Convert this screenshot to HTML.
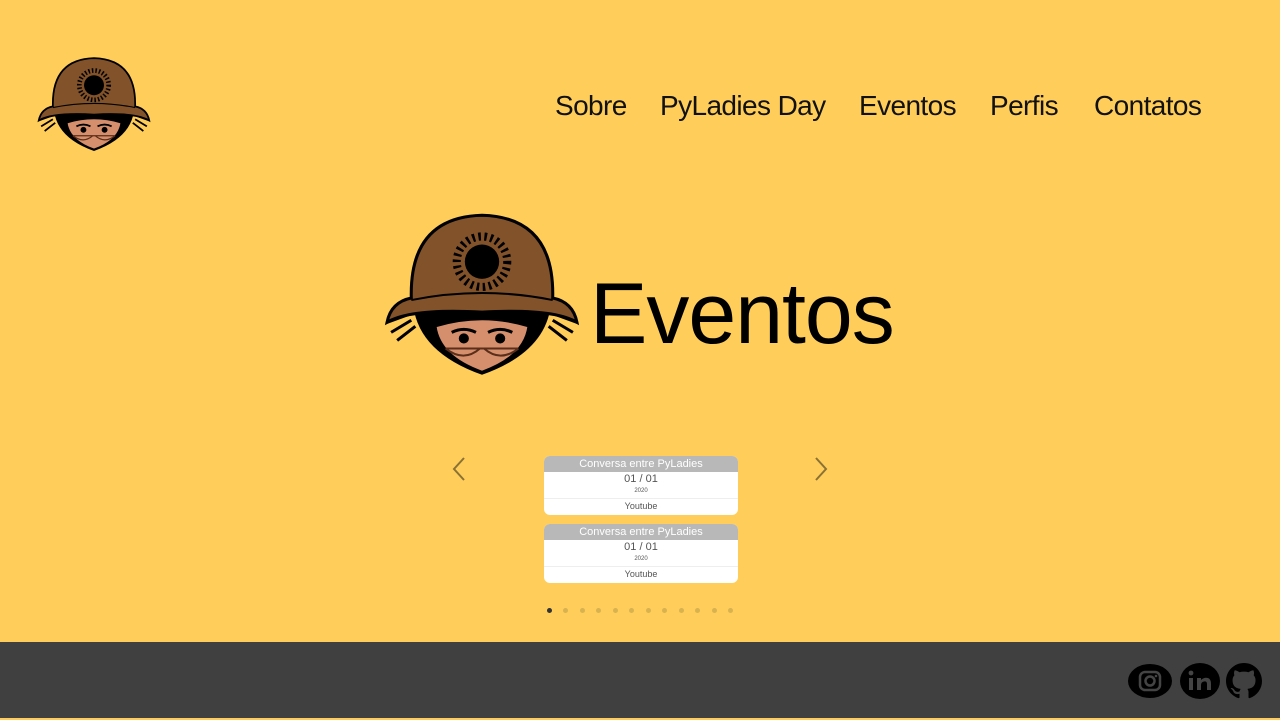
<!DOCTYPE html>
<html><head><meta charset="utf-8"><style>
body{margin:0;width:1280px;height:720px;background:#FFCD59;font-family:"Liberation Sans",sans-serif;position:relative;overflow:hidden}
.nav{position:absolute;top:90px;font-size:28px;color:#111;white-space:nowrap;letter-spacing:-0.6px}
.nav span{position:absolute}
h1{position:absolute;left:590px;top:265px;margin:0;font-size:86px;font-weight:normal;color:#000;letter-spacing:-1px}
.card{position:absolute;left:544px;width:194px;height:59px;background:#fff;border-radius:6px;overflow:hidden;text-align:center;color:#555}
.card .t{background:#b8b8b8;color:#fff;font-size:11px;height:16px;line-height:16px}
.card .d{font-size:11px;height:12px;line-height:14px}
.card .y{font-size:6px;height:14px;line-height:14px;border-bottom:1px solid #eee}
.card .p{font-size:9px;line-height:15px}
.dots{position:absolute;top:608px;left:547px}
.dots i{position:absolute;width:5px;height:5px;border-radius:50%;background:#d8b24f}
footer{position:absolute;left:0;top:642px;width:1280px;height:76px;background:#404040}
</style></head><body>
<svg width="0" height="0" style="position:absolute"><defs>
<g id="m">
<path d="M28 100 L6 108 M30 106 L10 118 M34 112 L16 126 M172 100 L194 108 M170 106 L190 118 M166 112 L184 126" stroke="#000" stroke-width="3"/>
<path d="M32 92 Q38 138 100 160 Q162 138 168 92 Z" fill="#000"/>
<path d="M54 112 Q58 142 100 157 Q142 142 146 112 Q100 98 54 112Z" fill="#D58F6C" stroke="#000" stroke-width="2"/>
<path d="M6 108 Q10 88 30 84 Q28 4 100 2 Q172 4 170 84 Q190 88 194 108 Q170 94 100 98 Q30 94 6 108Z" fill="#82522A" stroke="#000" stroke-width="3"/>
<path d="M30 86 Q100 72 170 86" fill="none" stroke="#000" stroke-width="2"/>
<circle cx="100" cy="48" r="17" fill="#000"/>
<circle cx="100" cy="48" r="21" fill="none" stroke="#82522A" stroke-width="2"/>
<circle cx="100" cy="48" r="25" fill="none" stroke="#000" stroke-width="8" stroke-dasharray="2.5 3.5"/>
<path d="M70 118 Q82 112 94 118 M106 118 Q118 112 130 118" stroke="#000" stroke-width="3" fill="none"/>
<circle cx="82" cy="124" r="5" fill="#000"/><circle cx="118" cy="124" r="5" fill="#000"/>
<path d="M64 134 Q82 148 98 134 M102 134 Q118 148 136 134 M64 134 H136" fill="none" stroke="#5a2e1a" stroke-width="2"/>
</g></defs></svg>
<svg style="position:absolute;left:33px;top:57px" width="122" height="94" viewBox="0 0 200 160"><use href="#m"/></svg>
<svg style="position:absolute;left:381px;top:213px" width="202" height="162" viewBox="0 0 200 160"><use href="#m"/></svg>
<div class="nav"><span style="left:555px">Sobre</span><span style="left:660px">PyLadies Day</span><span style="left:859px">Eventos</span><span style="left:990px">Perfis</span><span style="left:1094px">Contatos</span></div>
<h1>Eventos</h1>
<svg style="position:absolute;left:450px;top:456px" width="18" height="26"><path d="M14 2 L4 13 L14 24" fill="none" stroke="#8a7234" stroke-width="2"/></svg>
<svg style="position:absolute;left:812px;top:456px" width="18" height="26"><path d="M4 2 L14 13 L4 24" fill="none" stroke="#8a7234" stroke-width="2"/></svg>
<div class="card" style="top:456px"><div class="t">Conversa entre PyLadies</div><div class="d">01 / 01</div><div class="y">2020</div><div class="p">Youtube</div></div>
<div class="card" style="top:524px"><div class="t">Conversa entre PyLadies</div><div class="d">01 / 01</div><div class="y">2020</div><div class="p">Youtube</div></div>
<div class="dots"><i style="left:0;background:#333"></i><i style="left:16px"></i><i style="left:33px"></i><i style="left:49px"></i><i style="left:66px"></i><i style="left:82px"></i><i style="left:99px"></i><i style="left:115px"></i><i style="left:132px"></i><i style="left:148px"></i><i style="left:165px"></i><i style="left:181px"></i></div>
<footer>
<svg style="position:absolute;left:1128px;top:21px" width="44" height="36"><ellipse cx="22" cy="18" rx="22" ry="17" fill="#000"/><rect x="12" y="9" width="20" height="18" rx="5" fill="none" stroke="#444" stroke-width="2.5"/><circle cx="22" cy="18" r="4.5" fill="none" stroke="#444" stroke-width="2.5"/><circle cx="28" cy="13" r="1.3" fill="#444"/></svg>
<svg style="position:absolute;left:1180px;top:21px" width="40" height="36"><ellipse cx="20" cy="18" rx="20" ry="18" fill="#000"/><rect x="9" y="15" width="4" height="12" fill="#444"/><circle cx="11" cy="10" r="2.4" fill="#444"/><path d="M17 27 V15 H21 V17 Q24 14 28 15 Q31 16 31 21 V27 H27 V21 Q27 18 24 18.5 Q21 19 21 22 V27Z" fill="#444"/></svg>
<svg style="position:absolute;left:1226px;top:21px" width="36" height="36" viewBox="0 0 16 16"><path fill="#000" d="M8 0C3.580 0 0 3.580 0 8c0 3.540 2.290 6.530 5.470 7.590.4.070.550-.170.550-.380 0-.190-.010-.820-.010-1.490-2.010.370-2.530-.490-2.690-.940-.090-.230-.480-.940-.820-1.130-.280-.150-.680-.520-.010-.530.630-.010 1.080.580 1.230.820.720 1.210 1.870.870 2.330.660.070-.520.280-.870.510-1.070-1.780-.2-3.640-.890-3.640-3.950 0-.870.310-1.590.820-2.150-.080-.2-.360-1.020.080-2.120 0 0 .670-.210 2.200.820.640-.180 1.320-.270 2-.270.680 0 1.360.090 2 .270 1.530-1.040 2.200-.820 2.200-.820.440 1.100.160 1.920.080 2.120.510.560.820 1.270.820 2.150 0 3.070-1.870 3.750-3.650 3.950.290.250.540.730.540 1.480 0 1.070-.010 1.930-.010 2.200 0 .210.150.460.550.380A8.013 8.013 0 0016 8c0-4.420-3.580-8-8-8z"/></svg>
</footer>
</body></html>
